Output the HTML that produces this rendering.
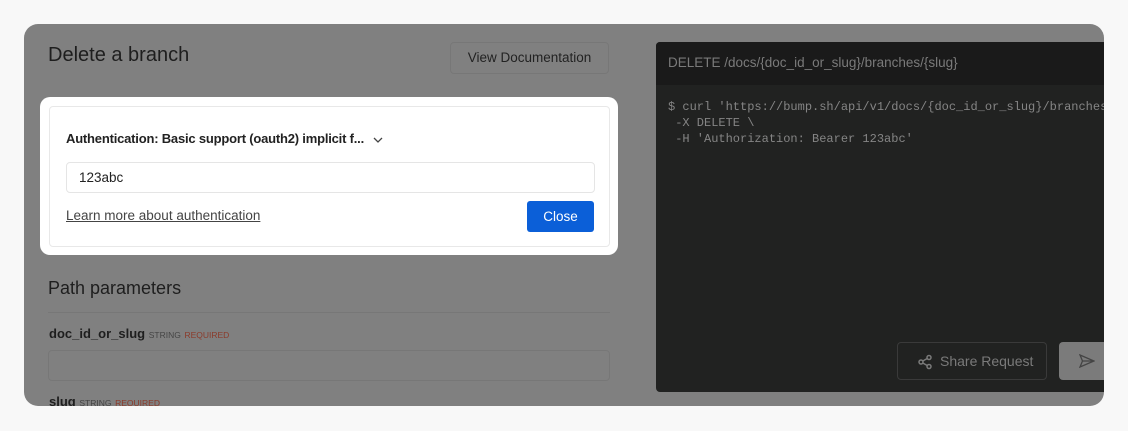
<!DOCTYPE html>
<html><head><meta charset="utf-8"><style>
*{box-sizing:border-box;margin:0;padding:0}
body{width:1128px;height:431px;background:#f8f8f8;font-family:"Liberation Sans",sans-serif;position:relative;overflow:hidden}
.panel{position:absolute;left:24px;top:24px;width:1080px;height:382px;background:#808080;border-radius:14px;overflow:hidden}
.abs{position:absolute}
.t1{left:24px;top:20px;font-size:20px;color:#1e1e1e}
.vd{left:426px;top:18px;width:159px;height:32px;border:1px solid #777;border-radius:4px;font-size:13.5px;color:#222;text-align:center;line-height:30px}
.pp{left:24px;top:254px;font-size:18px;color:#1e1e1e}
.hr{left:24px;top:288px;width:562px;height:1px;background:#777}
.lbl{font-size:13px;font-weight:bold;color:#1e1e1e}
.lbl span{font-size:8.5px;font-weight:normal;color:#444}
.lbl span.r{color:#8b3a2a}
.inp{left:24px;top:326px;width:562px;height:31px;border:1px solid #777;border-radius:4px}
.code{left:632px;top:18px;width:460px;height:350px;background:#212221;border-radius:4px;overflow:hidden}
.ch{height:43px;background:#1a1a1a;color:#7a7a7a;font-size:13.5px;padding:13px 0 0 12px}
pre{font-family:"Liberation Mono",monospace;font-size:12px;color:#858585;line-height:16px;padding:14px 0 0 12px}
.sh{left:241px;top:300px;width:150px;height:38px;border:1px solid #3a3a3a;border-radius:4px;color:#7a7a7a;font-size:14px;line-height:36px;padding-left:42px}
.send{left:403px;top:300px;width:80px;height:38px;background:#7b7b7b;border-radius:4px}
.modal{position:absolute;left:40px;top:97px;width:578px;height:158px;background:#fff;border-radius:10px}
.card{position:absolute;left:9px;top:9px;width:561px;height:141px;border:1px solid #e8e8e8;border-radius:4px}
.auth{position:absolute;left:16px;top:24px;font-size:13px;font-weight:bold;color:#222;letter-spacing:-0.2px}
.field{position:absolute;left:16px;top:55px;width:529px;height:31px;border:1px solid #e5e5e5;border-radius:4px;font-size:13.5px;color:#222;padding:7px 0 0 12px}
.learn{position:absolute;left:16px;top:101px;font-size:13.5px;color:#444;text-decoration:underline}
.close{position:absolute;left:477px;top:94px;width:67px;height:31px;background:#0b5fd8;border-radius:3px;color:#fff;font-size:13.5px;text-align:center;line-height:31px}
</style></head><body>
<div class="panel">
<div class="abs t1">Delete a branch</div>
<div class="abs vd">View Documentation</div>
<div class="abs pp">Path parameters</div>
<div class="abs hr"></div>
<div class="abs lbl" style="left:25px;top:302px">doc_id_or_slug <span>STRING</span> <span class="r">REQUIRED</span></div>
<div class="abs inp"></div>
<div class="abs lbl" style="left:25px;top:370px">slug <span>STRING</span> <span class="r">REQUIRED</span></div>
<div class="abs code">
<div class="ch">DELETE /docs/{doc_id_or_slug}/branches/{slug}</div>
<pre>$ curl 'https://bump.sh/api/v1/docs/{doc_id_or_slug}/branches/{slug}' \
 -X DELETE \
 -H 'Authorization: Bearer 123abc'</pre>
<div class="abs sh"><svg class="abs" style="left:19px;top:11px" width="16" height="16" viewBox="0 0 16 16" fill="none" stroke="#7a7a7a" stroke-width="1.5"><circle cx="12" cy="3.5" r="2"/><circle cx="4" cy="8" r="2"/><circle cx="12" cy="12.5" r="2"/><path d="M5.8 7 10.2 4.5M5.8 9 10.2 11.5"/></svg>Share Request</div>
<div class="abs send"><svg class="abs" style="left:20px;top:12px" width="16" height="14" viewBox="0 0 16 14" fill="none" stroke="#444" stroke-width="1.3"><path d="M1 1 15 7 1 13 3.5 7Z M3.5 7H15"/></svg></div>
</div>
</div>
<div class="modal"><div class="card">
<div class="auth">Authentication: Basic support (oauth2) implicit f... <svg style="margin-left:6px;vertical-align:middle" width="10" height="6" viewBox="0 0 10 6" fill="none" stroke="#444" stroke-width="1.3"><path d="M1 1 5 5 9 1"/></svg></div>
<div class="field">123abc</div>
<div class="learn">Learn more about authentication</div>
<div class="close">Close</div>
</div></div>
</body></html>
